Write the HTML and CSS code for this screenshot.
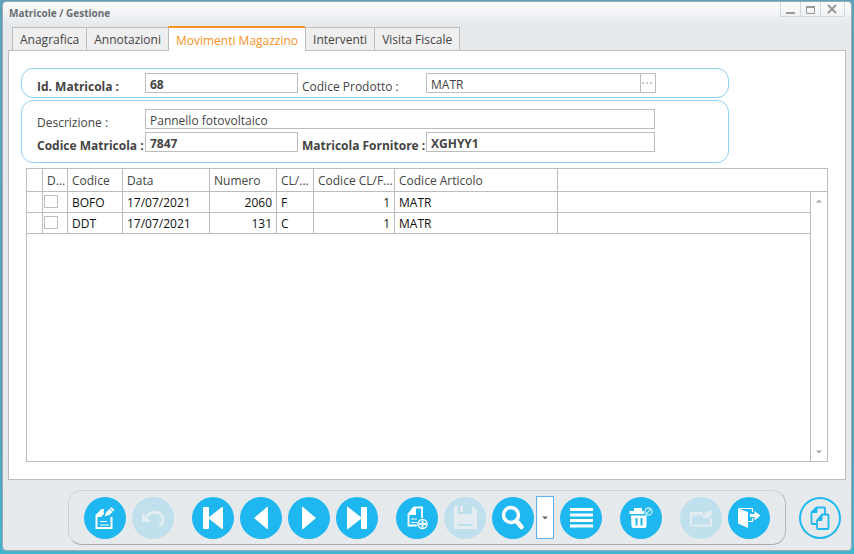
FILE: index.html
```html
<!DOCTYPE html>
<html lang="it">
  <head>
    <meta charset="utf-8">
    <title>Matricole / Gestione</title>
    <meta name="viewport" content="width=device-width, initial-scale=1.0">
    <link rel="stylesheet" href="styles.css">
  </head>
  <body>
    <div class="window">
      <header class="titlebar">
        <h1>Matricole / Gestione</h1>
        <div class="window-buttons">
          <button type="button" aria-label="Riduci"><svg width="19" height="15" viewBox="0 0 19 15"><path d="M5 11h9" stroke="#999" stroke-width="2"/></svg></button>
          <button type="button" aria-label="Ingrandisci"><svg width="19" height="15" viewBox="0 0 19 15"><path d="M5.500 4v7.500h8V4" fill="none" stroke="#999"/><path d="M5 5h9" stroke="#999" stroke-width="2"/></svg></button>
          <button type="button" class="close" aria-label="Chiudi"><svg width="19" height="15" viewBox="0 0 19 15"><path d="M5 3l8 8M13 3l-8 8" stroke="#999" stroke-width="2"/></svg></button>
        </div>
      </header>

      <nav class="tabs">
        <button type="button">Anagrafica</button>
        <button type="button">Annotazioni</button>
        <button type="button" class="active">Movimenti Magazzino</button>
        <button type="button">Interventi</button>
        <button type="button">Visita Fiscale</button>
      </nav>

      <main class="panel">
        <div class="group top">
          <label for="id" class="key">Id. Matricola :</label>
          <input id="id" type="text" class="key" value="68">
          <label for="prodotto">Codice Prodotto :</label>
          <div class="lookup">
            <input id="prodotto" type="text" value="MATR">
            <button type="button" aria-label="Cerca prodotto"><svg width="13" height="18" viewBox="0 0 13 18"><path d="M1 9h2M5 9h2M9 9h2" stroke="#c8c8c8" stroke-width="2"/></svg></button>
          </div>
        </div>
        <div class="group">
          <label for="descrizione">Descrizione :</label>
          <input id="descrizione" type="text" class="wide" value="Pannello fotovoltaico">
          <label for="codice" class="key">Codice Matricola :</label>
          <input id="codice" type="text" class="key" value="7847">
          <label for="fornitore" class="key">Matricola Fornitore :</label>
          <input id="fornitore" type="text" class="key" value="XGHYY1">
        </div>

        <div class="grid">
          <table>
            <colgroup>
              <col class="c-mark"><col class="c-check"><col class="c-codice"><col class="c-data"><col class="c-numero">
              <col class="c-cl"><col class="c-codcl"><col class="c-art"><col><col class="c-scroll">
            </colgroup>
            <thead>
              <tr>
                <th></th><th>D...</th><th>Codice</th><th>Data</th><th>Numero</th>
                <th>CL/...</th><th>Codice CL/F...</th><th>Codice Articolo</th><th colspan="2" class="last"></th>
              </tr>
            </thead>
            <tbody>
              <tr>
                <td></td><td class="check"><input type="checkbox" aria-label="Seleziona BOFO"></td><td>BOFO</td><td>17/07/2021</td><td class="num">2060</td>
                <td>F</td><td class="num">1</td><td>MATR</td><td></td>
                <td rowspan="3" class="scroll">
                  <div>
                    <button type="button" aria-label="Su"><svg width="6" height="4" viewBox="0 0 6 4"><path d="M0 3.500L3 .5l3 3z" fill="#aaa"/></svg></button>
                    <button type="button" aria-label="Giù"><svg width="6" height="4" viewBox="0 0 6 4"><path d="M0 .5l3 3 3-3z" fill="#aaa"/></svg></button>
                  </div>
                </td>
              </tr>
              <tr>
                <td></td><td class="check"><input type="checkbox" aria-label="Seleziona DDT"></td><td>DDT</td><td>17/07/2021</td><td class="num">131</td>
                <td>C</td><td class="num">1</td><td>MATR</td><td></td>
              </tr>
              <tr class="empty"><td colspan="9"></td></tr>
            </tbody>
          </table>
        </div>
      </main>

      <footer class="bottom">
        <div class="toolbar">
          <button type="button" class="round" aria-label="Modifica">
            <svg viewBox="0 0 42 42" fill="none" stroke="#fff"><path d="M20 13h-2l-5.500 5.500V31h15V20" stroke-width="2"/><path d="M19 12l-7.500 8H17l3-3z" fill="#fff" stroke="none"/><path d="M16 24.500h7M16 28h9" stroke-width="1.200"/><path d="M20.500 19.500l2-5 3.500 3z" fill="#fff" stroke="none"/><path d="M23.500 17l3.500-3.500M27.500 13l1.500-1.500" stroke-width="4"/></svg>
          </button>
          <button type="button" class="round" disabled aria-label="Annulla">
            <svg viewBox="0 0 42 42"><path d="M14 21c4-9 17-7 17 2 0 2-1 4-3.500 6" fill="none" stroke="#e3ecf0" stroke-width="3"/><path d="M10 15v10h9z" fill="#e3ecf0"/></svg>
          </button>
          <button type="button" class="round space" aria-label="Primo">
            <svg viewBox="0 0 42 42" fill="#fff"><rect x="11" y="10" width="6" height="22" rx="1"/><path d="M16 21L30 10Q31 9.500 31 11v20q0 1.500-1 1z"/></svg>
          </button>
          <button type="button" class="round" aria-label="Precedente">
            <svg viewBox="0 0 42 42" fill="#fff"><path d="M14 21L27 10q1-1 1 .5v21q0 1-1 .5z"/></svg>
          </button>
          <button type="button" class="round" aria-label="Successivo">
            <svg viewBox="0 0 42 42" fill="#fff"><path d="M28 21L15 10q-1-1-1 .5v21q0 1 1 .5z"/></svg>
          </button>
          <button type="button" class="round" aria-label="Ultimo">
            <svg viewBox="0 0 42 42" fill="#fff"><rect x="25" y="10" width="6" height="22" rx="1"/><path d="M26 21L12 10q-1-1-1 .5v21q0 1 1 .5z"/></svg>
          </button>
          <button type="button" class="round space" aria-label="Nuovo">
            <svg viewBox="0 0 42 42" fill="none" stroke="#fff"><path d="M21 28.500h-8.500V17l6-6.500h7.500V21" stroke-width="1.800"/><path d="M17 10h3v8h-8.500z" fill="#fff" stroke="none"/><path d="M15 22h6M15 25.500h6" stroke-width="1.200"/><circle cx="26.500" cy="27" r="4.500" stroke-width="1.500"/><path d="M26.500 23.500v7M23 27h7" stroke-width="2"/></svg>
          </button>
          <button type="button" class="round" disabled aria-label="Salva">
            <svg viewBox="0 0 42 42"><path d="M10 9h4v8h14V9h1l4 4v18q0 1-1 1H11q-1 0-1-1z" fill="#e3ecf0"/><path d="M16 9h3v6h-3z" fill="#e3ecf0"/><path d="M14 28h15" stroke="#bfe0ec" stroke-width="2"/></svg>
          </button>
          <button type="button" class="round" aria-label="Ricerca">
            <svg viewBox="0 0 42 42" fill="none" stroke="#fff" stroke-linecap="round"><circle cx="19" cy="18" r="7.500" stroke-width="3.500"/><path d="M24.500 24l5 6" stroke-width="4.500"/></svg>
          </button>
          <button type="button" class="drop" aria-label="Altre ricerche"><svg width="6" height="4" viewBox="0 0 6 4"><path d="M0 .5h6l-3 3z" fill="#666"/></svg></button>
          <button type="button" class="round" aria-label="Elenco">
            <svg viewBox="0 0 42 42"><path d="M10 12.500h23M10 18h23M10 23.500h23M10 29h23" stroke="#fff" stroke-width="3"/></svg>
          </button>
          <button type="button" class="round space" aria-label="Elimina">
            <svg viewBox="0 0 42 42" fill="none" stroke="#fff"><path d="M11 18.500h15.500V29q0 2-2 2h-11q-2 0-2-2z" fill="#fff" stroke="none"/><path d="M16.500 21v7.500M21.500 21v7.500" stroke="#1fb7f0" stroke-width="2"/><path d="M9.500 15.500H24M14 12.500h8" stroke-width="3"/><circle cx="28.500" cy="14.500" r="3.500" stroke="#c5edfb" stroke-width="1.300"/><path d="M26 17l5-5" stroke="#c5edfb" stroke-width="1.300"/></svg>
          </button>
          <button type="button" class="round space" disabled aria-label="Finestra">
            <svg viewBox="0 0 42 42" fill="none" stroke="#e3ecf0"><path d="M23 16H11v12.500h20V21" stroke-width="2"/><path d="M12 18h11" stroke-width="3" stroke-dasharray="2 1"/><path d="M23 20c0-4 4-6 9-6 0 4-2 7-5 7h-2l-2 1.500z" fill="#e3ecf0" stroke="none"/></svg>
          </button>
          <button type="button" class="round" aria-label="Esci">
            <svg viewBox="0 0 42 42" fill="none" stroke="#fff"><path d="M10 11.500l10 3.500v16l-10-4.500z" fill="#fff" stroke="none"/><path d="M11 11.500h13.500V15M20 24.500h4.500V21" stroke-width="1.200"/><path d="M22 18.500h6" stroke-width="3"/><path d="M26.500 14l6 4.500-6 5z" fill="#fff" stroke="none"/></svg>
          </button>
        </div>
        <button type="button" class="round outline" aria-label="Copia">
          <svg viewBox="0 0 42 42" fill="none" stroke="#1fb7f0" stroke-width="1.800" stroke-linejoin="round"><path d="M17 27h-3.500q-1 0-1-1V15.500l5-5H25q1 0 1 1V17"/><path d="M18 10.500v5h-5.500zM23 17.500v6h-5z" fill="#1fb7f0" stroke-width="1"/><path d="M18 23.500l5-6h5.500q1 0 1 1V31q0 1-1 1H19q-1 0-1-1z"/></svg>
        </button>
      </footer>
    </div>
  </body>
</html>
```
FILE: styles.css
```css
* {
  box-sizing: border-box;
}
body {
  margin: 0;
  height: 100vh;
  padding: 1px 2px 3px 2px;
  background: linear-gradient(#5ba2bb, #54a3ba 80%, #42b6ce);
  font-family: "Open Sans", "Noto Sans", sans-serif;
  font-size: 12px;
  line-height: 16px;
  color: #444;
}
button, input {
  font: inherit;
  color: inherit;
  margin: 0;
  padding: 0;
}
button {
  background: none;
  border: none;
}
svg {
  display: block;
}
.window {
  display: flex;
  flex-direction: column;
  height: 100%;
  border: 1px solid #9fa9b3;
  border-radius: 4px;
  background: linear-gradient(#fdfdfe, #e6eaed 22px);
}

/* title bar */
.titlebar {
  display: flex;
  justify-content: space-between;
  height: 24px;
  padding: 0 6px;
}
h1 {
  margin: 0;
  font-size: 10px;
  line-height: 22px;
  color: #6b6e71;
}
.window-buttons {
  display: flex;
  height: 15px;
  border: 1px solid #cdd8e2;
  border-top: none;
}
.window-buttons button + button {
  border-left: 1px solid #cdd8e2;
}
.window-buttons .close {
  padding: 0 2px;
}

/* tabs */
.tabs {
  display: flex;
  align-items: flex-end;
  padding-left: 9px;
}
.tabs button {
  height: 23px;
  padding: 2px 7px 0;
  background: #efefef;
  border: 1px solid #bdbdbd;
  border-right: none;
  border-bottom: none;
}
.tabs button:last-child {
  border-right: 1px solid #bdbdbd;
}
.tabs .active {
  position: relative;
  height: 25px;
  margin-bottom: -1px;
  background: #fff;
  border-top: 2px solid #f7931e;
  color: #f7931e;
}

.panel {
  flex: 1;
  display: flex;
  flex-direction: column;
  margin: 0 5px;
  padding: 17px 17px 17px 12px;
  background: #fff;
  border: 1px solid #bdbdbd;
}

/* form */
.group {
  display: grid;
  grid-template-columns: 108px 153px 128px 229px;
  row-gap: 3px;
  max-width: 708px;
  padding: 8px 15px 10px;
  border: 1px solid #8fd0f5;
  border-radius: 12px;
}
.group.top {
  grid-template-columns: 108px 153px 128px 230px;
  margin-bottom: 2px;
  padding: 4px 15px;
}
.group label {
  height: 20px;
  padding-top: 6px;
  white-space: nowrap;
}
.group input + label {
  padding-left: 4px;
}
.group .wide + label {
  padding-left: 0;
}
.group input {
  width: 100%;
  height: 20px;
  padding: 2px 4px 0;
  background: #fff;
  border: 1px solid #bdbdbd;
}
.key {
  font-weight: bold;
}
.wide {
  grid-column: span 3;
}
.lookup {
  display: flex;
}
.lookup button {
  width: 16px;
  border: 1px solid #bdbdbd;
  border-left: none;
}

/* movements table */
.grid {
  flex: 1;
  margin: 5px 0 0 5px;
  border: 1px solid #bdbdbd;
}
table {
  width: 100%;
  height: 100%;
  table-layout: fixed;
  border-spacing: 0;
}
.c-mark { width: 16px; }
.c-check { width: 25px; }
.c-codice { width: 55px; }
.c-data { width: 87px; }
.c-numero { width: 67px; }
.c-cl { width: 37px; }
.c-codcl { width: 81px; }
.c-art { width: 163px; }
.c-scroll { width: 16px; }
th, td {
  height: 21px;
  padding: 2px 4px 0;
  border-right: 1px solid #bdbdbd;
  border-bottom: 1px solid #bdbdbd;
  text-align: left;
  white-space: nowrap;
  overflow: hidden;
}
th {
  height: 23px;
  font-weight: normal;
}
td {
  color: #111;
}
.num {
  text-align: right;
}
.check {
  padding: 0 1px 2px;
}
.check input {
  appearance: none;
  display: block;
  width: 14px;
  height: 13px;
  border: 1px solid #bdbdbd;
}
.empty td {
  height: auto;
  border-bottom: none;
}
th.last, td.scroll {
  border-right: none;
}
td.scroll {
  height: 100%;
  padding: 0;
  border-bottom: none;
}
.scroll div {
  display: flex;
  flex-direction: column;
  justify-content: space-between;
  align-items: center;
  height: 100%;
}
.scroll button {
  padding: 7px 5px;
}

/* toolbar */
.bottom {
  display: flex;
  justify-content: flex-end;
  align-items: center;
  padding: 10px 10px 5px;
}
.toolbar {
  display: flex;
  align-items: center;
  gap: 6px;
  height: 55px;
  margin-right: 13px;
  padding: 0 15px;
  border: 1px solid #cfd2d4;
  border-bottom-color: #a9abac;
  border-right-color: #b5b7b8;
  border-radius: 14px;
}
.round {
  width: 42px;
  height: 42px;
  border-radius: 50%;
  background: #1fb7f0;
}
.round:disabled {
  background: #bfe0ec;
}
.round.outline {
  background: none;
  box-shadow: inset 0 0 0 2px #1fb7f0;
}
.space {
  margin-left: 12px;
}
.drop {
  display: flex;
  align-items: center;
  justify-content: center;
  width: 18px;
  height: 43px;
  margin-left: -4px;
  background: #fff;
  border: 1px solid #5db3f5;
}
```
